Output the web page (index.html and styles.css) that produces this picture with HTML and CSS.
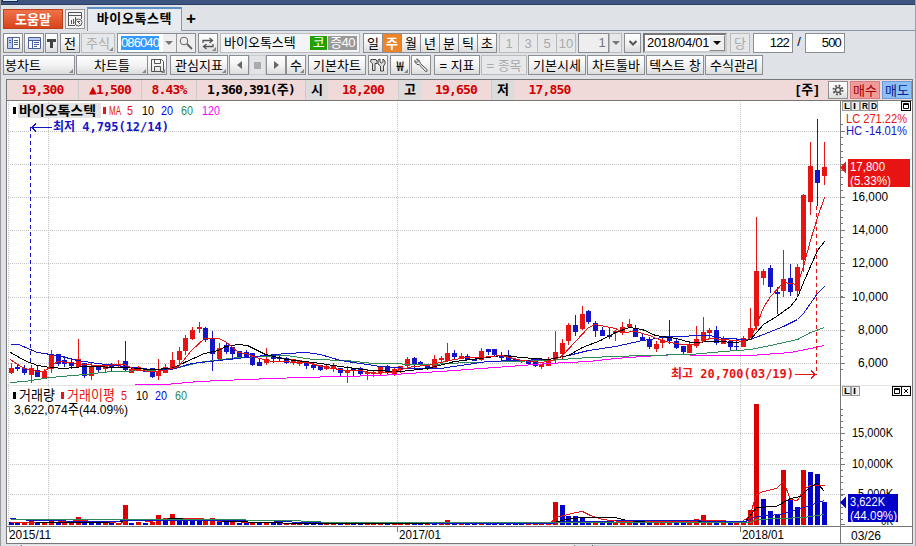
FILE: index.html
```
<!DOCTYPE html>
<html lang="ko">
<head>
    <meta charset="UTF-8">
    <title>바이오톡스텍</title>
    <link rel="stylesheet" href="styles.css">
</head>
<body>
    <div class="titlebar"><span class="title-icon"></span></div>

    <div class="tabs">
        <button class="help">도움말</button>
        <button class="tab-icon">
            <svg width="16" height="16" viewBox="0 0 16 16" fill="none" stroke="#555"><path d="M1.5 14V1.5h13V8M1.5 4.500h13M1 14.500h7M4.500 13V9M6.500 13V8M8.500 13V6"/><circle cx="11.500" cy="11.500" r="3.500"/><path d="M10 10l3 3M13 10.500h-3"/></svg>
        </button>
        <div class="tab">바이오톡스텍</div>
        <div class="tab-rest"><b>+</b></div>
    </div>

    <div class="toolbar">
        <button class="btn w20"><svg width="13" height="12" viewBox="0 0 13 12"><path d="M.5.5h12v11H.5z" fill="#fff" stroke="#4a5f9a"/><path d="M1 1h4v10H1z" fill="#b9cbec"/><path d="M5.500 1v10M7 3.500h4M7 5.500h4M7 7.500h4M2 3.500h2M2 5.500h2" stroke="#4a5f9a"/></svg></button>
        <button class="btn w20 gap1"><svg width="13" height="12" viewBox="0 0 13 12"><path d="M.5.5h12v11H.5z" fill="#fff" stroke="#4a5f9a"/><path d="M1 1h11v2H1z" fill="#b9cbec"/><path d="M1 3.500h11M4.500 4v7M6 5.500h5M6 7.500h5M6 9.500h3" stroke="#4a5f9a"/></svg></button>
        <button class="btn w13 gap1"><svg width="9" height="9"><path d="M0 0h9v3H6v6H3V3H0z" fill="#444"/></svg></button>
        <button class="btn w20 gap2">전</button>
        <button class="btn w34 gap1 off corner">주식</button>
        <div class="field code gap2"><span class="sel">086040</span><span class="code-arrow"><i class="down grey"></i></span><span class="find"><svg width="14" height="14" fill="none" stroke="#666"><circle cx="5" cy="5" r="3.800"/><path d="M8 8l5 5" stroke-width="2"/></svg></span></div>
        <button class="btn w20 gap2 corner"><svg width="12" height="13" fill="none" stroke="#555" stroke-width="1.300"><path d="M1 6V3.500h9M7.500 1l3 2.500-3 2.500M11 7v2.500H2M4.500 7l-3 2.500 3 2.500"/></svg></button>
        <div class="field name gap2"><span>바이오톡스텍</span><em class="kosdaq">코</em><em class="margin">증40</em></div>
        <div class="group gap3">
            <button class="btn w20">일</button><button class="btn w20 on">주</button><button class="btn w20">월</button><button class="btn w20">년</button><button class="btn w20">분</button><button class="btn w20">틱</button><button class="btn w20">초</button>
        </div>
        <div class="group gap2">
            <button class="btn w20 off">1</button><button class="btn w20 off">3</button><button class="btn w20 off">5</button><button class="btn w20 off">10</button>
        </div>
        <div class="field count gap2">1</div>
        <button class="btn w13 off"><i class="down grey"></i></button>
        <button class="btn w17 gap2"><svg width="8" height="6" fill="none" stroke="#555" stroke-width="2"><path d="M.5 1L4 4.500 7.500 1"/></svg></button>
        <div class="field date gap2">2018/04/01<span><i class="down"></i></span></div>
        <button class="btn w20 gap3 off">당</button>
        <div class="field num gap3">122</div>
        <span class="slash">/</span>
        <div class="field num">500</div>
    </div>

    <div class="toolbar second">
        <button class="btn w72 left corner">봉차트</button>
        <button class="btn w72 gap1 corner">차트틀</button>
        <button class="btn w20 joined corner"><svg width="13" height="13" fill="none" stroke="#555"><path d="M.5.5h10l2 2v10H.5zM3.500.5v4h6v-4M3.500 12V7.500h6V12"/></svg></button>
        <button class="btn w58 gap3 corner">관심지표</button>
        <button class="btn w20 gap1"><i class="tri-left"></i></button>
        <button class="btn w17 flat"><i class="square"></i></button>
        <button class="btn w20"><i class="tri-right"></i></button>
        <button class="btn w20 corner">수</button>
        <button class="btn w58 gap2">기본차트</button>
        <button class="btn w20 gap2"><svg width="16" height="14" fill="#ddd" stroke="#444"><path d="M1 1.500h5l1 2v2H5v7H2.500v-7L.5 4zM8 2l2-1v3l1.500 1L13 4V1l2 2v3l-1.500 2v5h-3V8L8 6z"/></svg></button>
        <button class="btn w20 gap2 corner won">₩</button>
        <button class="btn w20 gap1"><svg width="14" height="14" fill="#eee" stroke="#555"><path d="M3 .8l3 2.700.3 2L13 11.500v1.700l-1.500.3L5.200 6.500H3L.8 4V2.500L3 4.500l1.500-1.200L2.500 1z"/></svg></button>
        <button class="btn w46 gap3">= 지표</button>
        <button class="btn w46 gap1 off">= 종목</button>
        <button class="btn w58 gap1">기본시세</button>
        <button class="btn w58 gap1">차트툴바</button>
        <button class="btn w58 gap1">텍스트 창</button>
        <button class="btn w58 gap1">수식관리</button>
    </div>

    <div class="frame">
        <div class="quote">
            <span class="cell c72">19,300</span>
            <span class="cell c63">▲1,500</span>
            <span class="cell c55">8.43%</span>
            <span class="cell c109 black">1,360,391(주)</span>
            <span class="label">시</span><span class="cell c71">18,200</span>
            <span class="label">고</span><span class="cell c71">19,650</span>
            <span class="label">저</span><span class="cell c71 last">17,850</span>
            <span class="unit">[주]</span>
            <button class="btn w20 gear"><svg width="12" height="12" fill="none" stroke="#555"><circle cx="6" cy="6" r="2.500" stroke-width="1.500"/><circle cx="6" cy="6" r="4.500" stroke-width="2" stroke-dasharray="1.800 1.734"/></svg></button>
            <button class="trade buy">매수</button>
            <button class="trade sell">매도</button>
        </div>
        <svg id="chart" class="chart" width="905" height="442" viewBox="7 101 905 442"></svg>
    </div>
    <div class="footer"><span class="foot-tab"></span><span class="foot-mid"></span><span class="foot-end"></span></div>

    <script src="chart.js"></script>
</body>
</html>
```
FILE: styles.css
```
* {
    box-sizing: border-box;
}
body {
    margin: 0;
    width: 916px;
    height: 546px;
    overflow: hidden;
    background: #dfe3e8;
    border-left: 1px solid #999;
    border-right: 1px solid #8fa3bd;
    font-family: "Liberation Sans", "Noto Sans CJK KR", sans-serif;
    font-size: 13px;
    color: #000;
}
button {
    font: inherit;
    color: inherit;
    padding: 0;
    margin: 0;
}
.titlebar {
    height: 5px;
    background: #3d5480;
    border-bottom: 1px solid #2b3c63;
}
.title-icon {
    display: block;
    width: 16px;
    height: 2px;
    margin-left: 1px;
    background: #cfe3f2;
    border: 1px solid #12294d;
    border-top: 0;
}
.tabs {
    display: flex;
    height: 26px;
    padding-top: 2px;
    align-items: flex-end;
}
.help {
    width: 60px;
    height: 20px;
    margin: 0 2px 2px;
    border: 1px solid #b8401c;
    background: linear-gradient(#f0724a, #d8451a);
    color: #fff;
    font-weight: bold;
    line-height: 17px;
}
.tab-icon {
    width: 20px;
    height: 20px;
    margin: 0 2px 2px 0;
    border: 1px solid #999;
    background: #f4f4f4;
    display: flex;
    align-items: center;
    justify-content: center;
}
.tab {
    width: 95px;
    height: 24px;
    background: #e8ebef;
    border: 1px solid #8a97a8;
    border-top: 2px solid #5d8fc4;
    border-bottom: 0;
    font-weight: bold;
    letter-spacing: 0.6px;
    line-height: 20px;
    text-align: center;
    white-space: nowrap;
}
.tab-rest {
    flex: 1;
    height: 24px;
    padding-left: 4px;
    border-bottom: 1px solid #8a97a8;
    font-size: 17px;
    line-height: 23px;
}
.toolbar {
    display: flex;
    height: 22px;
    padding: 2px 0 0 2px;
}
.second {
    height: 26px;
}
.btn {
    position: relative;
    flex: none;
    height: 20px;
    border: 1px solid #8b8e92;
    background: linear-gradient(#fff, #f3f3f3 50%, #dcdcdc);
    display: flex;
    align-items: center;
    justify-content: center;
    line-height: 17px;
    white-space: nowrap;
}
.btn.left {
    justify-content: flex-start;
    padding-left: 1px;
}
.btn.off {
    color: #aaa;
    border-color: #bbb;
    background: #e6e8ea;
}
.btn.on {
    color: #fff;
    font-weight: bold;
    background: #ee8427;
}
.btn.flat {
    background: #e2e4e7;
    border-color: #ccc;
}
.btn.won {
    font-family: "Noto Sans CJK KR", sans-serif;
}
.corner::after {
    content: "";
    position: absolute;
    right: 1px;
    bottom: 1px;
    border-left: 4px solid transparent;
    border-bottom: 4px solid #888;
}
.w13 { width: 13px; }
.w17 { width: 17px; }
.w20 { width: 20px; }
.w34 { width: 34px; }
.w46 { width: 46px; }
.w58 { width: 58px; }
.w72 { width: 72px; }
.gap1 { margin-left: 1px; }
.gap2 { margin-left: 2px; }
.gap3 { margin-left: 3px; }
.group {
    display: flex;
}
.group .btn + .btn {
    margin-left: -1px;
}
.joined {
    margin-left: -1px;
}
.field {
    flex: none;
    display: flex;
    align-items: center;
    height: 20px;
    border: 1px solid #8b8e92;
    background: #fff;
    line-height: 18px;
    white-space: nowrap;
}
.code {
    width: 79px;
    padding-left: 3px;
}
.sel {
    width: 38px;
    height: 14px;
    line-height: 14px;
    background: #3399ff;
    color: #fff;
    letter-spacing: -0.9px;
}
.code-arrow,
.find {
    height: 18px;
    display: flex;
    align-items: center;
    justify-content: center;
    background: #eee;
}
.code-arrow {
    width: 13px;
    margin-left: 4px;
}
.find {
    width: 20px;
    border-left: 1px solid #999;
}
.name {
    width: 140px;
    padding-left: 3px;
    background: #f2f4f6;
    border-color: #bbb;
}
.name span {
    width: 86px;
}
.name em {
    font-style: normal;
    color: #fff;
    height: 14px;
    line-height: 13px;
    text-align: center;
    letter-spacing: -0.6px;
}
.name .kosdaq {
    width: 17px;
    background: #22a000;
}
.name .margin {
    width: 29px;
    margin-left: 1px;
    background: #999;
}
.count,
.num {
    justify-content: flex-end;
    padding-right: 3px;
    letter-spacing: -0.8px;
}
.count {
    width: 31px;
    background: #eee;
    color: #777;
}
.num {
    width: 40px;
}
.date {
    width: 84px;
    padding-left: 2px;
    border: 2px solid #777;
    border-right-color: #ccc;
    border-bottom-color: #ccc;
    line-height: 16px;
    letter-spacing: -0.3px;
    justify-content: space-between;
}
.date span {
    width: 16px;
    height: 16px;
    background: #eee;
    border: 1px solid #888;
    border-top-color: #fff;
    border-left-color: #fff;
    display: flex;
    align-items: center;
    justify-content: center;
}
.slash {
    width: 12px;
    text-align: center;
    line-height: 18px;
}
.down {
    border: 4px solid transparent;
    border-top-color: #000;
    border-bottom: 0;
}
.down.grey {
    border-top-color: #777;
}
.tri-left {
    border: 4px solid transparent;
    border-right: 5px solid #666;
    border-left: 0;
}
.tri-right {
    border: 4px solid transparent;
    border-left: 5px solid #666;
    border-right: 0;
}
.square {
    width: 7px;
    height: 7px;
    background: #aaa;
}
.frame {
    width: 907px;
    height: 465px;
    margin-left: 5px;
    border: 1px solid #777;
    background: #fff;
}
.quote {
    display: flex;
    height: 21px;
    background: #f0d9d9;
    border-bottom: 1px solid #777;
    line-height: 19px;
    font-weight: bold;
    white-space: nowrap;
}
.cell {
    flex: none;
    border-right: 1px solid #ccc;
    text-align: center;
    color: #d00000;
    font-family: "DejaVu Sans Mono", "Noto Sans CJK KR", monospace;
    font-size: 13px;
    letter-spacing: -0.85px;
}
.cell.black {
    color: #000;
}
.cell.last {
    border-right: 0;
}
.c55 { width: 55px; }
.c63 { width: 63px; }
.c71 { width: 71px; }
.c72 { width: 72px; }
.c109 { width: 109px; }
.label {
    flex: none;
    width: 22px;
    height: 20px;
    text-align: center;
    background: #dcdcdc;
}
.unit {
    width: 32px;
    margin-left: auto;
    letter-spacing: 1px;
}
.gear,
.trade {
    margin-top: 1px;
    height: 18px;
    font-weight: normal;
}
.trade {
    width: 30px;
    margin-left: 2px;
    line-height: 15px;
}
.buy {
    background: #f09a9a;
    border: 1px solid #d08080;
    color: #a00000;
}
.sell {
    background: #8fc0f5;
    border: 1px solid #6a9ad8;
    color: #00208c;
}
.chart {
    display: block;
}
.chart text {
    font-size: 13.5px;
}
.chart .bold {
    font-size: 13px;
    font-weight: bold;
}
.chart .marker {
    font-family: "DejaVu Sans Mono", "Noto Sans CJK KR", monospace;
    font-size: 12.5px;
    font-weight: bold;
}
.chart .tiny {
    font-size: 9px;
    font-weight: bold;
}
.footer {
    display: flex;
    height: 2px;
    padding-top: 1px;
}
.foot-tab {
    width: 21px;
    border-right: 1px solid #666;
}
.foot-mid {
    width: 553px;
    border-right: 1px solid #666;
    background: #eceef0;
}
.foot-end {
    flex: 1;
    margin-left: 17px;
    border-left: 1px solid #666;
    background: #d3d6da;
}
```
FILE: chart.js
```
const RED = '#e81414';
const BLUE = '#1414c8';
const GREEN = '#2e8b57';
const PINK = '#ff00ff';
const STEP = 6.72;
const FIRST_X = 10.5;

// one weekly candle: colour, wick top, wick bottom, body top, body bottom
const candles = `
r 363 374 368 373|b 365 371 367 369|b 365 375 368 373|r 365 383 368 375|b 366 377 370 377|r 369 379 371 378
r 350 373 355 369|b 354 366 354 364|b 356 367 360 364|b 359 369 363 366|r 339 367 359 367|b 363 378 363 376
r 363 380 366 376|b 365 372 367 370|r 364 372 365 369|b 363 371 364 367|r 360 368 364 366|b 341 372 361 370
r 369 373 369 373|r 366 371 367 370|b 369 372 369 372|b 368 378 368 377|r 359 380 371 376|r 364 373 367 373
r 352 368 360 368|r 347 365 351 360|r 335 355 338 351|r 327 340 330 339|r 322 333 327 329|b 327 342 328 340
b 331 371 338 354|r 343 359 348 359|b 343 354 345 352|b 347 360 347 354|b 351 358 351 357|b 350 357 352 357
b 353 366 353 365|b 359 366 362 366|r 348 365 359 363|b 355 363 355 359|b 355 362 357 359|b 357 364 358 363
r 359 365 359 363|r 360 366 360 364|b 361 369 361 366|b 363 370 365 368|b 365 371 365 370|r 365 370 366 369
r 363 372 366 368|b 368 376 368 373|r 366 383 371 373|b 368 377 368 370|b 367 376 368 374|r 369 380 372 374
r 371 377 372 374|r 366 376 367 373|b 365 374 366 373|r 368 376 369 374|r 366 373 366 370|r 357 368 359 366
b 357 368 358 365|b 361 365 362 365|b 364 370 366 368|r 355 369 359 369|r 356 362 358 360|r 343 361 353 361
b 350 360 353 357|r 353 359 356 358|b 354 360 356 360|b 359 361 359 361|r 348 361 351 360|b 349 355 349 352
b 349 357 349 355|b 352 361 355 358|b 350 361 355 361|b 358 362 359 362|b 360 363 360 362|b 360 364 360 364
b 361 367 361 366|r 364 369 364 367|r 357 366 359 366|r 331 364 352 360|r 339 359 343 354|r 323 345 325 341
b 315 336 325 332|r 306 330 314 329|b 310 324 311 322|b 321 337 323 331|b 327 336 330 336|b 327 339 335 337
r 330 341 331 333|r 322 335 327 333|r 319 327 324 327|b 325 337 328 337|b 333 341 337 340|b 337 349 339 347
r 341 352 344 349|r 337 348 340 343|b 320 344 337 341|b 339 349 341 348|b 346 354 346 352|r 341 353 344 353
r 326 348 339 346|r 317 341 332 341|r 328 338 330 333|b 326 345 330 343|r 336 344 340 344|b 341 350 341 347
b 338 351 346 347|r 336 347 338 347|r 308 338 328 338|r 217 330 271 326|r 269 285 271 278|b 265 293 268 287
b 287 314 292 294|r 250 297 279 291|b 264 296 278 292|r 264 296 267 291|r 194 272 195 260|r 142 215 166 202
b 119 206 170 183|r 142 185 167 176`.trim().split(/[|\n]/).map(s => s.split(' '));

// wide-range weeks keep their real order: the jump in early 2018 starts at index 111
// bar height in px over the volume baseline
const volumes = `b3 b2 r2 r4 b2 r2 r4 b2 r3 r3 r8 b4 b4 b3 r4 b2 r2 r20 b2 r3 b2 r3 r10 b4 r11 b5
b5 b5 b4 r4 r7 b3 b3 r4 b2 b2 r2 b2 r2 b2 b2 r2 r2 r2 b2 b2 b2 r2 r2 b2 r2 b2 b2 r2 r1 r2 b2 r2 r2 r2
b2 b2 r1 b2 r2 r5 b2 r2 b2 b1 r2 b2 b2 b2 b1 b2 b2 r1 r2 r2 r2 r23 b20 b9 b9 b8 b4 r4 b3 b2 r2 r3 r4
b3 b3 b2 r2 r3 r5 b3 b2 r3 r6 r10 r5 b2 r5 b2 r2 r2 r15 r121 b26 b14 b11 r55 b25 b18 r55 b53 b51 b23`.trim().split(/\s+/);

const averages = [
    [PINK, '134,384 165,384 198,381 245,379 300,377 340,376 380,375 407,373 440,371 467,369 508,366 548,363 588,361 615,358 642,356 676,354 703,355 750,355 790,352 810,348 824,345'],
    [GREEN, '10,382 24,381 50,377 84,374 111,371 151,370 178,367 198,362 238,357 265,356 286,355 313,359 346,360 373,363 430,364 467,362 501,361 548,360 588,357 642,355 690,354 723,351 750,349 770,345 797,339 810,332 824,327'],
    [BLUE, '10,344 18,344 37,352 57,355 77,360 97,363 124,366 151,369 171,369 191,363 218,360 245,357 265,355 286,353 306,352 320,354 340,360 360,363 380,366 407,368 440,368 460,365 487,361 514,360 548,359 568,355 588,350 615,346 642,340 669,336 709,335 723,338 750,339 763,334 783,326 797,319 803,313 817,293 824,286'],
    ['#000', '10,352 24,360 37,365 50,367 64,368 84,366 124,367 150,369 171,368 184,362 204,353 218,350 225,346 238,344 247,345 265,354 286,359 313,362 340,366 370,370 400,371 427,368 454,361 487,357 501,355 521,357 548,359 568,355 582,347 600,340 615,332 629,327 642,329 655,335 676,338 690,342 716,341 736,342 750,339 763,324 776,316 790,306 797,297 803,282 817,250 824,241'],
    [RED, '10,359 17,364 24,368 37,371 44,371 50,366 57,361 70,362 84,364 97,365 124,364 137,370 151,371 165,370 178,366 191,350 204,338 218,338 225,341 238,352 245,353 259,358 272,361 306,362 326,367 346,370 360,370 373,373 390,372 400,369 413,366 427,365 440,362 454,359 467,357 481,357 501,355 521,360 541,362 555,359 562,355 575,341 588,327 595,324 615,328 622,332 635,331 649,335 656,338 669,342 682,344 696,344 709,338 723,339 743,341 750,337 756,325 763,307 770,296 783,282 797,284 803,266 810,240 817,217 824,197'],
    [RED, '10,522 50,522 80,520 110,522 120,523 128,519 150,521 165,518 200,518 220,521 300,523 550,523 555,517 568,514 575,512 582,511 590,515 602,519 620,521 690,521 720,520 740,522 749,516 756,494 763,491 776,488 783,481 790,499 797,500 803,489 810,485 824,485'],
    ['#000', '35,522 60,522 100,522 120,521 125,520 140,520 175,518 190,519 230,521 300,523 550,523 565,519 580,517 615,517 626,520 650,522 745,521 756,507 776,506 790,498 800,496 810,486 817,483 824,491'],
    [BLUE, '10,518 20,519 30,520 100,521 140,520 265,520 300,522 550,523 570,521 660,520 690,520 710,521 745,521 756,516 780,514 790,511 803,507 824,500'],
    [GREEN, '10,519 200,519 290,520 330,522 750,522 756,519 780,518 803,517 824,514']
];

let out = '';

function line(x1, y1, x2, y2, color, extra = '') {
    out += `<path d="M${x1} ${y1}L${x2} ${y2}" stroke="${color}" fill="none" ${extra}/>`;
}
function rect(x, y, w, h, color, extra = '') {
    out += `<rect x="${x}" y="${y}" width="${w}" height="${h}" fill="${color}" ${extra}/>`;
}
function text(x, y, str, width, color = '#000', cls = '') {
    out += `<text x="${x}" y="${y}" fill="${color}" class="${cls}" textLength="${width}" lengthAdjust="spacingAndGlyphs">${str}</text>`;
}

out += '<g shape-rendering="crispEdges">';
// grid
[131.5, 164.5, 197.5, 230.5, 263.5, 297.5, 330.5, 363.5, 433.5, 464.5, 494.5].forEach(y => line(8, y, 841, y, '#c4c4c4', 'stroke-dasharray="1 1"'));
[8.5, 48.5, 397.5, 740.5].forEach(x => line(x, 102, x, 526, '#c4c4c4', 'stroke-dasharray="1 1"'));
line(7, 385.5, 912, 385.5, '#e4e4e4');

volumes.forEach((v, i) => {
    const h = +v.slice(1);
    rect(Math.round(FIRST_X + i * STEP) - 2, 525 - h, 5, h, v[0] === 'r' ? '#dc0000' : '#0000c8');
});
candles.forEach(([c, high, low, top, bottom], i) => {
    const x = Math.round(FIRST_X + i * STEP);
    const color = c === 'r' ? RED : BLUE;
    rect(x, high, 1, low - high, color);
    rect(x - 2, top, 5, bottom - top, color);
});
averages.forEach(([color, points]) => {
    out += `<polyline points="${points}" transform="translate(.5 .5)" fill="none" stroke="${color}"/>`;
});

// lowest / highest markers
line(30.5, 127, 30.5, 365, BLUE, 'stroke-dasharray="4 3"');
line(32, 127.5, 52, 127.5, BLUE);
line(816.5, 206, 816.5, 375, RED, 'stroke-dasharray="4 3"');
line(795, 374.5, 815, 374.5, RED);
out += `<path d="M36 123.500L32 127.500L36 131.500" stroke="${BLUE}" fill="none"/>`;
out += `<path d="M811 370.500L815 374.500L811 378.500" stroke="${RED}" fill="none"/>`;

// axes
line(840.5, 101, 840.5, 543, '#777');
line(7, 526.5, 912, 526.5, '#777');
[9.5, 397.5, 740.5].forEach(x => line(x, 527, x, 532, '#777'));
for (let i = 0; i < 38; i++) {
    const y = Math.round(124 + i * 6.63);
    line(841, y + 0.5, 843, y + 0.5, '#777');
}
for (let y = 409; y < 525; y += 6.12) {
    line(841, Math.round(y) + 0.5, 843, Math.round(y) + 0.5, '#777');
}
[131.5, 164.5, 197.5, 230.5, 263.5, 297.5, 330.5, 363.5, 433.5, 464.5, 494.5, 524.5].forEach(y => line(841, y, 845, y, '#777'));
out += '</g>';

// price pane legend
rect(18, 103, 83, 15, '#e4e4e4');
rect(13, 107, 3, 7, '#000');
text(19, 115, '바이오톡스텍', 77, '#000', 'bold');
rect(103, 107, 3, 7, RED);
text(109, 115, 'MA', 12, RED);
text(127, 115, '5', 6, RED);
text(142, 115, '10', 12);
text(161, 115, '20', 12, '#0000ff');
text(181, 115, '60', 12, GREEN);
text(202, 115, '120', 18, PINK);
text(53, 131, '최저 4,795(12/14)', 116, BLUE, 'marker');
text(671, 378, '최고 20,700(03/19)', 123, RED, 'marker');

// volume pane legend
rect(13, 392, 3, 7, '#000');
text(19, 400, '거래량', 36);
rect(61, 392, 3, 7, RED);
text(67, 400, '거래이평', 48, RED);
text(121, 400, '5', 6, RED);
text(136, 400, '10', 12);
text(155, 400, '20', 12, '#0000ff');
text(175, 400, '60', 12, GREEN);
text(14, 414, '3,622,074주(44.09%)', 114);

// price axis
text(846, 123, 'LC 271.22%', 61, RED);
text(846, 135, 'HC -14.01%', 61, BLUE);
text(852, 168, '18,000', 36);
text(852, 201, '16,000', 36);
text(852, 234, '14,000', 36);
text(852, 267, '12,000', 36);
text(852, 301, '10,000', 36);
text(858, 334, '8,000', 30);
text(858, 367, '6,000', 30);
rect(848, 159, 62, 28, RED);
text(850, 171, '17,800', 35, '#fff');
text(850, 185, '(5.33%)', 41, '#fff');
out += `<path d="M840 167.500L846 161.500V173.500z" fill="${RED}"/>`;

// volume axis
text(852, 437, '15,000K', 41);
text(852, 468, '10,000K', 41);
text(858, 498, '5,000K', 35);
text(881, 525, '0K', 12);
rect(848, 494, 50, 28, '#0000c8');
text(850, 506, '3,622K', 35, '#fff');
text(850, 520, '(44.09%)', 47, '#fff');
out += '<path d="M840 502.500L846 496.500V508.500z" fill="#0000c8"/>';

text(9, 539, '2015/11', 42);
text(399, 539, '2017/01', 42);
text(742, 539, '2018/01', 42);
text(851, 540, '03/26', 30);

// small pane buttons
function paneButton(x, y, letter) {
    rect(x + 0.5, y + 0.5, 8, 9, '#eeeeea', 'stroke="#999"');
    text(x + 2, y + 8, letter, letter === 'I' ? 3 : 6, '#000', 'tiny');
}
function paneBox(x, y, d) {
    rect(x + 0.5, y + 0.5, 9, 9, '#fff', 'stroke="#000"');
    out += `<path d="${d}" transform="translate(${x} ${y})" stroke="#000" fill="none"/>`;
}
'LIRD'.split('').forEach((s, i) => paneButton(842 + i * 9, 101, s));
'LI'.split('').forEach((s, i) => paneButton(842 + i * 9, 386, s));
paneBox(901, 101, 'M2.500 2.500h5v5h-5zM2 3.500h6');
paneBox(892, 386, 'M2.500 2.500h5v5h-5zM2 3.500h6');
paneBox(901, 386, 'M3 3l4 4M7 3l-4 4');

document.getElementById('chart').innerHTML = out;
```
